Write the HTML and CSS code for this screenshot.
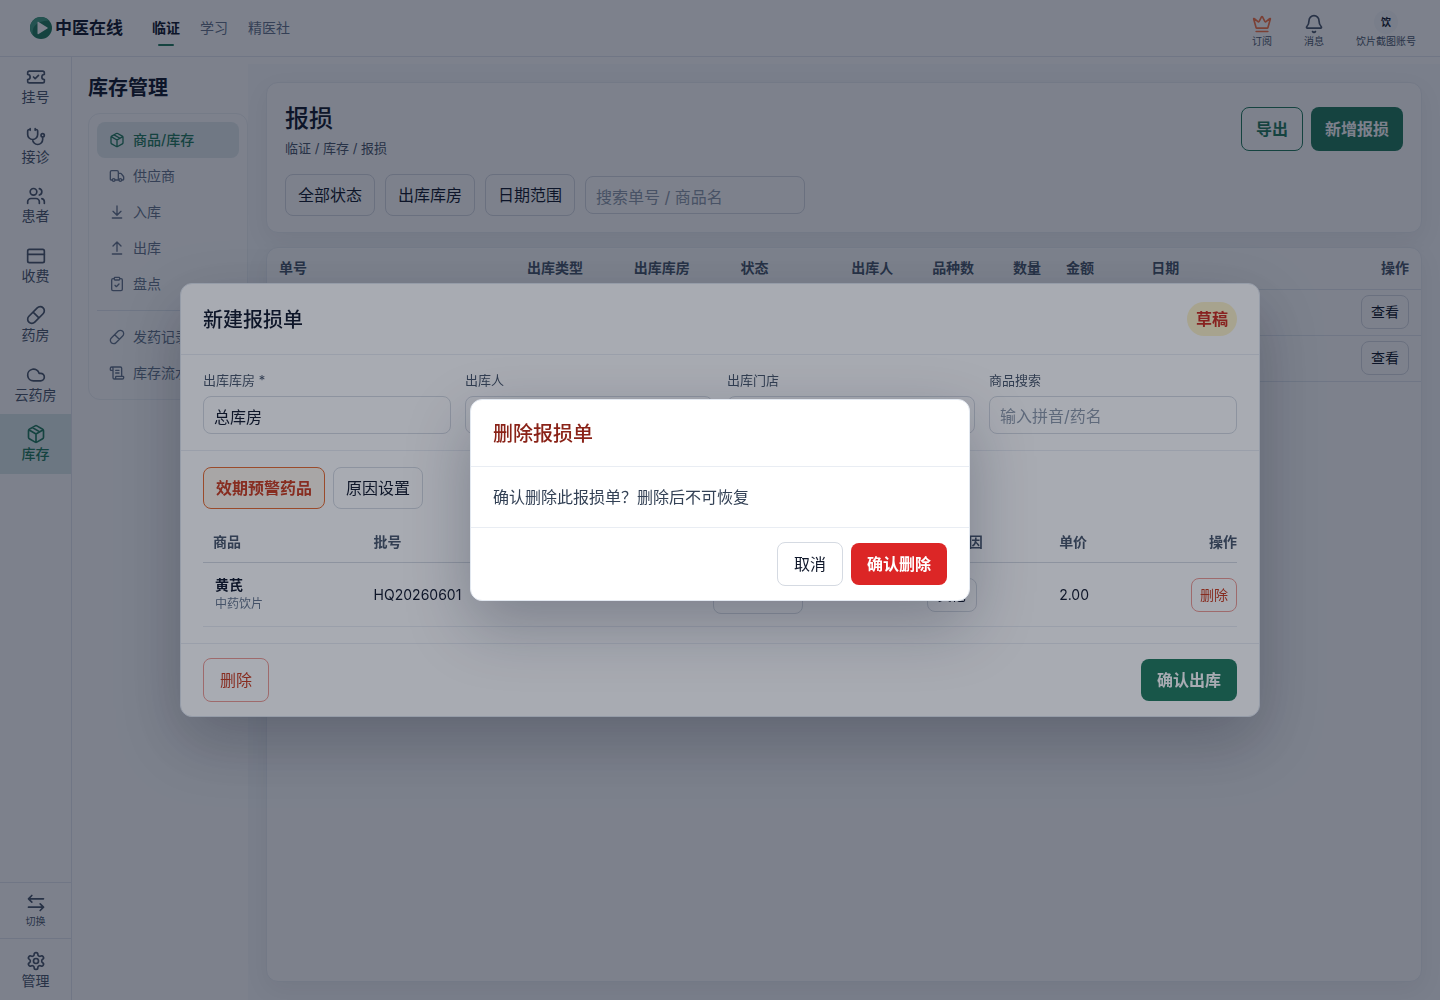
FILE: index.html
```
<!DOCTYPE html>
<html lang="zh-CN">
<head>
    <meta charset="UTF-8">
    <meta name="viewport" content="width=device-width, initial-scale=1.0">
    <title>报损 - 中医在线</title>
    <link rel="stylesheet" href="styles.css">
</head>
<body>

    <!-- Shared icon shapes -->
    <svg class="sprite" aria-hidden="true">
        <symbol id="i-box" viewBox="0 0 24 24"><path d="M11 21.73a2 2 0 0 0 2 0l7-4A2 2 0 0 0 21 16V8a2 2 0 0 0-1-1.73l-7-4a2 2 0 0 0-2 0l-7 4A2 2 0 0 0 3 8v8a2 2 0 0 0 1 1.73zM12 22V12M3.3 7 12 12l8.7-5M7.5 4.27l9 5.15"/></symbol>
        <symbol id="i-pill" viewBox="0 0 24 24"><path d="m10.5 20.5 10-10a4.95 4.95 0 1 0-7-7l-10 10a4.95 4.95 0 1 0 7 7ZM8.5 8.5l7 7"/></symbol>
    </svg>

    <div class="app">
        <header class="topbar">
            <div class="logo">
                <svg class="logo-mark" viewBox="0 0 24 24">
                    <circle cx="12" cy="12" r="11" fill="#1f7a5c"/>
                    <path d="M12 1A11 11 0 0 0 1 12a11 11 0 0 0 3 7.5C2.500 12 6 5 20 4.500A11 11 0 0 0 12 1Z" fill="#3f9c7f"/>
                    <path d="M8.500 6.500v11a.7.7 0 0 0 1.100.6l8.800-5.500a.7.7 0 0 0 0-1.200L9.600 5.900a.7.7 0 0 0-1.100.6Z" fill="#fff"/>
                </svg>
                <span>中医在线</span>
            </div>
            <nav class="topnav">
                <a href="#" class="active">临证</a>
                <a href="#">学习</a>
                <a href="#">精医社</a>
            </nav>
            <div class="tools">
                <a href="#" class="tool">
                    <svg class="icon crown" viewBox="0 0 24 24"><path d="M11.562 3.266a.5.500 0 0 1 .876 0L15.390 8.870a1 1 0 0 0 1.516.294L21.183 5.500a.5.500 0 0 1 .798.519l-2.834 10.246a1 1 0 0 1-.956.734H5.810a1 1 0 0 1-.957-.734L2.020 6.020a.5.500 0 0 1 .798-.519l4.276 3.664a1 1 0 0 0 1.516-.294zM5 21h14"/></svg>
                    <span>订阅</span>
                </a>
                <a href="#" class="tool">
                    <svg class="icon" viewBox="0 0 24 24"><path d="M10.268 21a2 2 0 0 0 3.464 0M3.262 15.326A1 1 0 0 0 4 17h16a1 1 0 0 0 .740-1.673C19.410 13.956 18 12.499 18 8A6 6 0 0 0 6 8c0 4.499-1.411 5.956-2.738 7.326"/></svg>
                    <span>消息</span>
                </a>
                <a href="#" class="tool">
                    <span class="avatar">饮</span>
                    <span>饮片截图账号</span>
                </a>
            </div>
        </header>

        <div class="layout">
            <nav class="rail">
                <a href="#" class="rail-item">
                    <svg class="icon" viewBox="0 0 24 24"><path d="M2 9a3 3 0 1 1 0 6v2a2 2 0 0 0 2 2h16a2 2 0 0 0 2-2v-2a3 3 0 1 1 0-6V7a2 2 0 0 0-2-2H4a2 2 0 0 0-2 2ZM9 12l2 2 4-4"/></svg>
                    <span>挂号</span>
                </a>
                <a href="#" class="rail-item">
                    <svg class="icon" viewBox="0 0 24 24"><path d="M11 2v2M5 2v2M5 3H4a2 2 0 0 0-2 2v4a6 6 0 0 0 12 0V5a2 2 0 0 0-2-2h-1M8 15a6 6 0 0 0 12 0v-3"/><circle cx="20" cy="10" r="2"/></svg>
                    <span>接诊</span>
                </a>
                <a href="#" class="rail-item">
                    <svg class="icon" viewBox="0 0 24 24"><path d="M16 21v-2a4 4 0 0 0-4-4H6a4 4 0 0 0-4 4v2M22 21v-2a4 4 0 0 0-3-3.870M16 3.130a4 4 0 0 1 0 7.750"/><circle cx="9" cy="7" r="4"/></svg>
                    <span>患者</span>
                </a>
                <a href="#" class="rail-item">
                    <svg class="icon" viewBox="0 0 24 24"><rect x="2" y="4" width="20" height="16" rx="2"/><path d="M2 10h20"/></svg>
                    <span>收费</span>
                </a>
                <a href="#" class="rail-item">
                    <svg class="icon"><use href="#i-pill"/></svg>
                    <span>药房</span>
                </a>
                <a href="#" class="rail-item">
                    <svg class="icon" viewBox="0 0 24 24"><path d="M17.500 19H9a7 7 0 1 1 6.710-9h1.790a4.500 4.500 0 1 1 0 9Z"/></svg>
                    <span>云药房</span>
                </a>
                <a href="#" class="rail-item active">
                    <svg class="icon"><use href="#i-box"/></svg>
                    <span>库存</span>
                </a>
                <div class="rail-bottom">
                    <button type="button" class="rail-switch">
                        <svg class="icon" viewBox="0 0 24 24"><path d="M7 3 3 7l4 4M3 7h18M17 13l4 4-4 4M21 17H3"/></svg>
                        <span>切换</span>
                    </button>
                    <a href="#" class="rail-item">
                        <svg class="icon" viewBox="0 0 24 24"><path d="M12.220 2h-.440a2 2 0 0 0-2 2v.180a2 2 0 0 1-1 1.730l-.430.250a2 2 0 0 1-2 0l-.150-.080a2 2 0 0 0-2.730.730l-.220.380a2 2 0 0 0 .730 2.730l.150.100a2 2 0 0 1 1 1.720v.510a2 2 0 0 1-1 1.740l-.150.090a2 2 0 0 0-.730 2.730l.220.380a2 2 0 0 0 2.730.730l.150-.080a2 2 0 0 1 2 0l.430.250a2 2 0 0 1 1 1.730V20a2 2 0 0 0 2 2h.440a2 2 0 0 0 2-2v-.180a2 2 0 0 1 1-1.730l.430-.250a2 2 0 0 1 2 0l.150.080a2 2 0 0 0 2.730-.730l.220-.390a2 2 0 0 0-.730-2.730l-.150-.080a2 2 0 0 1-1-1.740v-.500a2 2 0 0 1 1-1.740l.150-.090a2 2 0 0 0 .730-2.730l-.220-.380a2 2 0 0 0-2.730-.730l-.150.080a2 2 0 0 1-2 0l-.430-.250a2 2 0 0 1-1-1.730V4a2 2 0 0 0-2-2z"/><circle cx="12" cy="12" r="3"/></svg>
                        <span>管理</span>
                    </a>
                </div>
            </nav>

            <aside class="subnav">
                <h2>库存管理</h2>
                <nav class="menu">
                    <a href="#" class="active"><svg class="icon"><use href="#i-box"/></svg>商品/库存</a>
                    <a href="#"><svg class="icon" viewBox="0 0 24 24"><path d="M14 18V6a2 2 0 0 0-2-2H4a2 2 0 0 0-2 2v11a1 1 0 0 0 1 1h2M15 18H9M19 18h2a1 1 0 0 0 1-1v-3.650a1 1 0 0 0-.220-.624l-3.480-4.350A1 1 0 0 0 17.520 8H14"/><circle cx="17" cy="18" r="2"/><circle cx="7" cy="18" r="2"/></svg>供应商</a>
                    <a href="#"><svg class="icon" viewBox="0 0 24 24"><path d="M12 17V3M6 11l6 6 6-6M19 21H5"/></svg>入库</a>
                    <a href="#"><svg class="icon" viewBox="0 0 24 24"><path d="m18 9-6-6-6 6M12 3v14M5 21h14"/></svg>出库</a>
                    <a href="#"><svg class="icon" viewBox="0 0 24 24"><rect x="8" y="2" width="8" height="4" rx="1"/><path d="M16 4h2a2 2 0 0 1 2 2v14a2 2 0 0 1-2 2H6a2 2 0 0 1-2-2V6a2 2 0 0 1 2-2h2M9 14l2 2 4-4"/></svg>盘点</a>
                    <hr>
                    <a href="#"><svg class="icon"><use href="#i-pill"/></svg>发药记录</a>
                    <a href="#"><svg class="icon" viewBox="0 0 24 24"><path d="M15 12h-5M15 8h-5M19 17V5a2 2 0 0 0-2-2H4M8 21h12a2 2 0 0 0 2-2v-1a1 1 0 0 0-1-1H11a1 1 0 0 0-1 1v1a2 2 0 1 1-4 0V5a2 2 0 1 0-4 0v2a1 1 0 0 0 1 1h3"/></svg>库存流水</a>
                </nav>
            </aside>

            <main class="content">
                <section class="card page-head">
                    <div class="page-title">
                        <div>
                            <h1>报损</h1>
                            <p class="crumbs">临证 / 库存 / 报损</p>
                        </div>
                        <div class="actions">
                            <button type="button" class="btn large outline">导出</button>
                            <button type="button" class="btn large primary">新增报损</button>
                        </div>
                    </div>
                    <div class="filters">
                        <button type="button" class="btn">全部状态</button>
                        <button type="button" class="btn">出库库房</button>
                        <button type="button" class="btn">日期范围</button>
                        <input type="text" class="field" placeholder="搜索单号 / 商品名" aria-label="搜索单号 / 商品名">
                    </div>
                </section>

                <section class="card list">
                    <table class="orders">
                        <thead>
                            <tr>
                                <th class="c-no">单号</th>
                                <th class="c-type">出库类型</th>
                                <th class="c-type">出库库房</th>
                                <th class="c-status">状态</th>
                                <th class="c-user">出库人</th>
                                <th class="c-user">品种数</th>
                                <th class="c-qty">数量</th>
                                <th class="c-sum">金额</th>
                                <th>日期</th>
                                <th class="right">操作</th>
                            </tr>
                        </thead>
                        <tbody>
                            <tr>
                                <td colspan="9"></td>
                                <td class="right"><button type="button" class="btn small">查看</button></td>
                            </tr>
                            <tr>
                                <td colspan="9"></td>
                                <td class="right"><button type="button" class="btn small">查看</button></td>
                            </tr>
                        </tbody>
                    </table>
                </section>
            </main>
        </div>
    </div>

    <!-- New loss order -->
    <div class="backdrop">
        <div class="dialog order-dialog" role="dialog" aria-labelledby="orderTitle">
            <div class="dialog-head">
                <h2 id="orderTitle">新建报损单</h2>
                <span class="badge">草稿</span>
            </div>
            <form class="order-form">
                <div>
                    <label for="warehouse">出库库房 *</label>
                    <input type="text" class="field" id="warehouse" value="总库房">
                </div>
                <div>
                    <label for="operator">出库人</label>
                    <input type="text" class="field" id="operator">
                </div>
                <div>
                    <label for="store">出库门店</label>
                    <input type="text" class="field" id="store">
                </div>
                <div>
                    <label for="goods">商品搜索</label>
                    <input type="text" class="field" id="goods" placeholder="输入拼音/药名">
                </div>
            </form>
            <div class="order-items">
                <div class="item-tools">
                    <button type="button" class="btn warning">效期预警药品</button>
                    <button type="button" class="btn">原因设置</button>
                </div>
                <table class="items">
                    <thead>
                        <tr>
                            <th class="c-goods">商品</th>
                            <th class="c-batch">批号</th>
                            <th class="c-count"></th>
                            <th class="c-reason">报损原因</th>
                            <th>单价</th>
                            <th class="right">操作</th>
                        </tr>
                    </thead>
                    <tbody>
                        <tr>
                            <td class="goods"><strong>黄芪</strong><small>中药饮片</small></td>
                            <td>HQ20260601</td>
                            <td><input type="text" class="field count" aria-label="数量"></td>
                            <td><button type="button" class="btn small reason">其他</button></td>
                            <td>2.00</td>
                            <td class="right"><button type="button" class="btn small danger-outline">删除</button></td>
                        </tr>
                    </tbody>
                </table>
            </div>
            <div class="dialog-foot">
                <button type="button" class="btn large danger-outline">删除</button>
                <button type="button" class="btn primary">确认出库</button>
            </div>
        </div>
    </div>

    <!-- Delete confirmation -->
    <div class="backdrop backdrop-top">
        <div class="dialog confirm-dialog" role="alertdialog" aria-labelledby="confirmTitle">
            <div class="confirm-head">
                <h2 id="confirmTitle">删除报损单</h2>
            </div>
            <p class="confirm-body">确认删除此报损单？删除后不可恢复</p>
            <div class="dialog-foot confirm-foot">
                <button type="button" class="btn large">取消</button>
                <button type="button" class="btn danger">确认删除</button>
            </div>
        </div>
    </div>

</body>
</html>
```

FILE: styles.css
```
* {
    margin: 0;
    padding: 0;
    box-sizing: border-box;
}
body {
    background-color: #ffffff;
    color: #0f172a;
    font-family: Inter, 'Noto Sans CJK SC', sans-serif;
    font-size: 14px;
    line-height: 20px;
    overflow: hidden;
}
a {
    color: inherit;
    text-decoration: none;
}
button, input {
    font: inherit;
    color: inherit;
}
.sprite {
    display: none;
}
.icon {
    width: 20px;
    height: 20px;
    flex-shrink: 0;
    fill: none;
    stroke: currentColor;
    stroke-width: 2;
    stroke-linecap: round;
    stroke-linejoin: round;
}
.app {
    display: flex;
    flex-direction: column;
    height: calc(100vh - 1px);
}

/* Top bar */
.topbar {
    display: flex;
    align-items: center;
    height: 57px;
    padding: 0 24px 0 29px;
    border-bottom: 1px solid #e2e8f0;
}
.logo {
    display: flex;
    align-items: center;
    gap: 2px;
    font-size: 17px;
    font-weight: 600;
}
.logo-mark {
    width: 24px;
    height: 24px;
}
.topnav {
    display: flex;
    gap: 20px;
    margin-left: 29px;
    color: #64748b;
}
.topnav a {
    display: flex;
    flex-direction: column;
    align-items: center;
    height: 36px;
    padding-top: 8px;
}
.topnav .active {
    color: #0f172a;
    font-weight: 600;
}
.topnav .active::after {
    content: "";
    width: 16px;
    height: 2px;
    margin-top: 6px;
    border-radius: 1px;
    background-color: #1f7a5c;
}
.tools {
    display: flex;
    gap: 32px;
    margin-left: auto;
    color: #475569;
    font-size: 10px;
    line-height: 12px;
}
.tool {
    display: flex;
    flex-direction: column;
    align-items: center;
    justify-content: flex-end;
    gap: 1px;
}
.tool .icon {
    stroke-width: 2;
}
.tool .crown {
    color: #f97344;
}
.avatar {
    width: 24px;
    height: 24px;
    border-radius: 50%;
    background-color: #f6f8fb;
    color: #0f172a;
    font-weight: 600;
    line-height: 24px;
    text-align: center;
}

/* Left rail */
.layout {
    display: flex;
    flex: 1;
    min-height: 0;
}
.rail {
    display: flex;
    flex-direction: column;
    width: 72px;
    border-right: 1px solid #e2e8f0;
    color: #475569;
}
.rail-item {
    display: flex;
    flex-direction: column;
    align-items: center;
    gap: 1px;
    padding: 10px 0 11px;
    line-height: 1.25;
}
.rail-item.active {
    background-color: #dbe9e9;
    color: #1f7a5c;
    font-weight: 500;
}
.rail-bottom {
    margin-top: auto;
}
.rail-switch {
    display: flex;
    flex-direction: column;
    align-items: center;
    justify-content: center;
    gap: 2px;
    width: 100%;
    height: 56px;
    border: 0;
    border-top: 1px solid #e2e8f0;
    background: none;
    font-size: 10px;
    line-height: 12px;
}
.rail-bottom .rail-item {
    padding-top: 12px;
    border-top: 1px solid #e2e8f0;
}

/* Inventory menu */
.subnav {
    width: 176px;
    padding: 16px 0 0 16px;
}
.subnav h2 {
    font-size: 20px;
    font-weight: 600;
    line-height: 30px;
}
.menu {
    margin-top: 10px;
    padding: 8px;
    border: 1px solid #edf1f5;
    border-radius: 12px;
    color: #64748b;
}
.menu a {
    display: flex;
    align-items: center;
    gap: 8px;
    height: 36px;
    padding: 0 12px;
    border-radius: 8px;
    white-space: nowrap;
}
.menu .icon {
    width: 16px;
    height: 16px;
}
.menu .active {
    background-color: #e2ecee;
    color: #1f7a5c;
    font-weight: 500;
}
.menu hr {
    margin: 8px 0;
    border: 0;
    border-top: 1px solid #e2e8f0;
}

/* Page */
.content {
    display: flex;
    flex-direction: column;
    flex: 1;
    gap: 14px;
    min-width: 0;
    margin-top: 7px;
    padding: 18px;
    background-color: #f8fafc;
}
.card {
    border: 1px solid #e9edf3;
    border-radius: 12px;
    background-color: #ffffff;
    box-shadow: 0 8px 24px rgba(15, 23, 42, 0.06);
}
.page-head {
    padding: 17px 18px 16px;
}
.page-title {
    display: flex;
    justify-content: space-between;
    align-items: center;
}
h1 {
    font-size: 24px;
    font-weight: 500;
    line-height: 38px;
}
.crumbs {
    color: #475569;
    font-size: 13px;
}
.actions {
    display: flex;
    gap: 8px;
}
.filters {
    display: flex;
    align-items: center;
    gap: 10px;
    margin-top: 16px;
}
.filters .field {
    width: 220px;
}
.list {
    flex: 1;
    overflow: hidden;
}
table {
    width: 100%;
    border-collapse: collapse;
    table-layout: fixed;
}
th {
    color: #475569;
    font-weight: 600;
    text-align: left;
}
.orders th {
    height: 41px;
    padding: 0 12px;
    border-bottom: 1px solid #e2e8f0;
}
.orders td {
    height: 46px;
    padding: 0 12px;
    border-bottom: 1px solid #e2e8f0;
}
.orders .c-no {
    width: 21.5%;
}
.orders .c-type {
    width: 9.25%;
}
.orders .c-status {
    width: 9.6%;
}
.orders .c-user {
    width: 7%;
}
.orders .c-qty {
    width: 4.6%;
}
.orders .c-sum {
    width: 7.4%;
}
.orders .c-qty, .orders .c-sum {
    white-space: nowrap;
}
.right, th.right {
    text-align: right;
}

/* Buttons and fields */
.btn {
    height: 42px;
    padding: 0 12px;
    border: 1px solid #d5dae2;
    border-radius: 8px;
    background-color: transparent;
    font-size: 16px;
    cursor: pointer;
}
.btn.large {
    height: 44px;
    padding: 0 16px;
}
.btn.small {
    height: 34px;
    padding: 0 9px;
    font-size: 14px;
}
.btn.outline {
    padding: 0 14px;
    border-color: #1f7a5c;
    color: #1f7a5c;
    font-weight: 600;
}
.btn.primary {
    padding: 0 16px;
    border: 0;
    background-color: #1f7a5c;
    color: #ffffff;
    font-weight: 600;
}
.actions .btn.primary {
    padding: 0 14px;
}
.btn.warning {
    border-color: #ea6a2c;
    background-color: #fff7ed;
    color: #cc3a1c;
    font-weight: 600;
}
.btn.danger-outline {
    border-color: #f09a92;
    color: #cc3a1c;
}
.btn.small.danger-outline {
    padding: 0 8px;
}
.btn.danger {
    padding: 0 16px;
    border: 0;
    background-color: #dc2626;
    color: #ffffff;
    font-weight: 600;
}
.field {
    width: 100%;
    height: 38px;
    padding: 3px 10px 0;
    border: 1px solid #d5dae2;
    border-radius: 8px;
    background-color: transparent;
    font-size: 16px;
}
.field::placeholder {
    color: #8d99aa;
}

/* Dialogs */
.backdrop {
    position: fixed;
    inset: 0 0 1px;
    display: flex;
    justify-content: center;
    align-items: center;
    background-color: rgba(15, 23, 42, 0.28);
}
.backdrop-top {
    background-color: rgba(15, 23, 42, 0.36);
}
.dialog {
    border: 1px solid #e2e8f0;
    border-radius: 12px;
    background-color: #ffffff;
    box-shadow: 0 24px 64px rgba(15, 23, 42, 0.28);
}
.dialog h2 {
    padding-top: 2px;
    font-size: 20px;
    font-weight: 500;
    line-height: 30px;
}
.order-dialog {
    width: 75%;
}
.dialog-head {
    display: flex;
    justify-content: space-between;
    align-items: center;
    height: 71px;
    padding: 0 22px;
    border-bottom: 1px solid #e9edf3;
}
.badge {
    padding: 5px 9px;
    border-radius: 17px;
    background-color: #fef3c7;
    color: #cc2a1c;
    font-size: 16px;
    font-weight: 600;
    line-height: 24px;
}
.order-form {
    display: grid;
    grid-template-columns: repeat(4, 1fr);
    gap: 14px;
    padding: 16px 22px;
    border-bottom: 1px solid #e9edf3;
}
.order-form label {
    display: block;
    margin-bottom: 7px;
    color: #475569;
    font-size: 13px;
    line-height: 18px;
}
.order-form .field {
    display: block;
}
.order-items {
    padding: 16px 22px;
}
.item-tools {
    display: flex;
    gap: 8px;
    margin-bottom: 12px;
}
.items th {
    height: 42px;
    border-bottom: 1px solid #d5dae2;
}
.items td {
    height: 64px;
    border-bottom: 1px solid #e9edf3;
}
.items .c-goods {
    width: 16.5%;
    padding-left: 10px;
}
.items .c-batch {
    width: 32.8%;
}
.items .c-count {
    width: 20.7%;
}
.items .c-reason {
    width: 12.8%;
}
.items .goods {
    padding-left: 12px;
}
.goods strong {
    display: block;
    font-weight: 600;
    line-height: 18px;
}
.goods small {
    display: block;
    color: #64748b;
    font-size: 12px;
    line-height: 20px;
}
.field.count {
    width: 90px;
}
.btn.small.reason {
    padding: 0 10px;
}
.dialog-foot {
    display: flex;
    justify-content: space-between;
    align-items: center;
    height: 73px;
    padding: 0 22px;
    border-top: 1px solid #e9edf3;
}
.confirm-dialog {
    width: 500px;
}
.confirm-head {
    padding: 17px 22px;
    border-bottom: 1px solid #e9edf3;
    color: #8a2318;
}
.confirm-body {
    padding: 18px 22px;
    color: #334155;
    font-size: 16px;
    line-height: 24px;
}
.confirm-foot {
    justify-content: flex-end;
    gap: 8px;
}
```
